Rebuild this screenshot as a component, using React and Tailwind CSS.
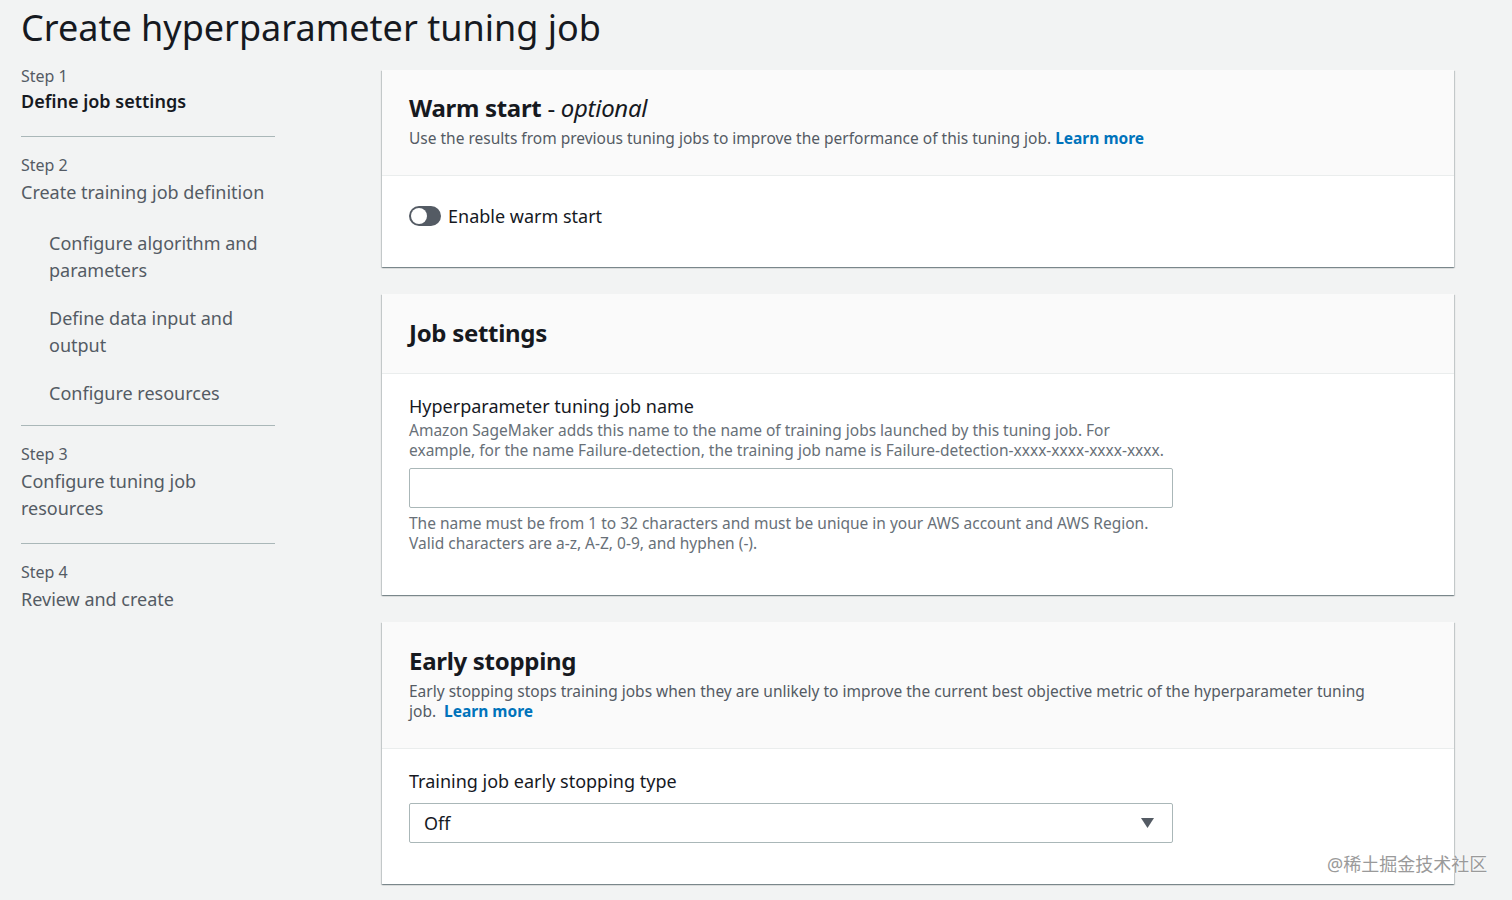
function Card({ title, desc, children, headerClass = "" }) {
  return (
    <div className="bg-white shadow-[0_1px_1px_0_rgba(0,28,36,0.3),1px_1px_1px_0_rgba(0,28,36,0.15),-1px_1px_1px_0_rgba(0,28,36,0.15)]">
      <div className={"bg-[#fafafa] border-b border-[#eaeded] px-[27px] " + headerClass}>
        {title}
        {desc}
      </div>
      {children}
    </div>
  );
}

function Learn() {
  return <a className="font-bold text-[#0073bb] ml-1">Learn more</a>;
}

export default function App() {
  return (
    <div className="min-h-[900px] bg-[#f2f3f3] text-[#16191f] font-['Noto_Sans',sans-serif] relative">
      <h1 className="pl-[21px] pt-[4px] text-[36px] leading-[48px] text-[#16191f]">
        Create hyperparameter tuning job
      </h1>
      <div className="flex mt-[14px]">
        <nav className="w-[254px] ml-[21px] shrink-0 text-[#545b64]">
          <div className="pb-[20px] border-b border-[#aab7b8]">
            <div className="text-[16px] leading-[20px]">Step 1</div>
            <div className="text-[18px] leading-[30px] font-semibold text-[#16191f]">Define job settings</div>
          </div>
          <div className="pt-[17px] pb-[18px] border-b border-[#aab7b8]">
            <div className="text-[16px] leading-[22px]">Step 2</div>
            <div className="text-[18px] leading-[30px] mt-[1px]">Create training job definition</div>
            <div className="pl-[28px] text-[18px] leading-[27px] mt-[23px]">
              <div>Configure algorithm and parameters</div>
              <div className="mt-[21px]">Define data input and output</div>
              <div className="mt-[21px]">Configure resources</div>
            </div>
          </div>
          <div className="pt-[17px] pb-[21px] border-b border-[#aab7b8]">
            <div className="text-[16px] leading-[22px]">Step 3</div>
            <div className="text-[18px] leading-[27px] mt-[3px]">Configure tuning job resources</div>
          </div>
          <div className="pt-[17px]">
            <div className="text-[16px] leading-[22px]">Step 4</div>
            <div className="text-[18px] leading-[30px] mt-[1px]">Review and create</div>
          </div>
        </nav>
        <main className="ml-[107px] w-[1072px] flex flex-col gap-[27px] mt-[4px]">
          <Card
            headerClass="pt-[20px] pb-[26px]"
            title={
              <h2 className="text-[24px] leading-[36px] font-bold tracking-[-0.3px]">
                Warm start <span className="font-normal">- </span><span className="font-normal italic">optional</span>
              </h2>
            }
            desc={
              <p className="text-[15.5px] leading-[22px] text-[#545b64] mt-[1px]">
                Use the results from previous tuning jobs to improve the performance of this tuning job.<Learn />
              </p>
            }
          >
            <div className="px-[27px] pt-[27px] pb-[38px] flex items-center gap-[7px]">
              <span className="w-[32px] h-[20px] rounded-full bg-[#545b64] flex items-center px-[2px]">
                <span className="w-[16px] h-[16px] rounded-full bg-white" />
              </span>
              <span className="text-[18px] leading-[26px]">Enable warm start</span>
            </div>
          </Card>

          <Card
            headerClass="pt-[21px] pb-[22px]"
            title={<h2 className="text-[24px] leading-[36px] font-bold tracking-[-0.3px]">Job settings</h2>}
          >
            <div className="px-[27px] pt-[19px] pb-[42px]">
              <div className="text-[18px] leading-[26px]">Hyperparameter tuning job name</div>
              <p className="mt-[1px] text-[15.5px] leading-[20px] text-[#687078] max-w-[764px]">
                Amazon SageMaker adds this name to the name of training jobs launched by this tuning job. For example, for the name Failure-detection, the training job name is Failure-detection-xxxx-xxxx-xxxx-xxxx.
              </p>
              <input className="block mt-[8px] w-[764px] h-[40px] border border-[#aab7b8] rounded-[2px] bg-white outline-none" />
              <p className="mt-[5px] text-[15.5px] leading-[20px] text-[#687078]">
                The name must be from 1 to 32 characters and must be unique in your AWS account and AWS Region.
                <br />
                Valid characters are a-z, A-Z, 0-9, and hyphen (-).
              </p>
            </div>
          </Card>

          <Card
            headerClass="pt-[23px] pb-[27px]"
            title={<h2 className="text-[24px] leading-[32px] font-bold tracking-[-0.3px]">Early stopping</h2>}
            desc={
              <p className="mt-[4px] text-[15.5px] leading-[20px] text-[#545b64] max-w-[975px]">
                Early stopping stops training jobs when they are unlikely to improve the current best objective metric of the hyperparameter tuning job. <Learn />
              </p>
            }
          >
            <div className="px-[27px] pt-[19px] pb-[41px]">
              <div className="text-[18px] leading-[26px]">Training job early stopping type</div>
              <div className="mt-[9px] w-[764px] h-[40px] border border-[#aab7b8] rounded-[2px] flex items-center justify-between pl-[14px] pr-[18px]">
                <span className="text-[18px]">Off</span>
                <svg width="13" height="10" viewBox="0 0 13 10"><path d="M0 0h13L6.5 10z" fill="#545b64" /></svg>
              </div>
            </div>
          </Card>
        </main>
      </div>
      <div className="absolute left-[1327px] top-[852px] text-[18px] leading-[24px] text-[#9a9a9a] font-['Noto_Sans','Noto_Sans_CJK_SC',sans-serif] [text-shadow:0_0_2px_#fff,0_0_1px_#fff]">
        @稀土掘金技术社区
      </div>
    </div>
  );
}
